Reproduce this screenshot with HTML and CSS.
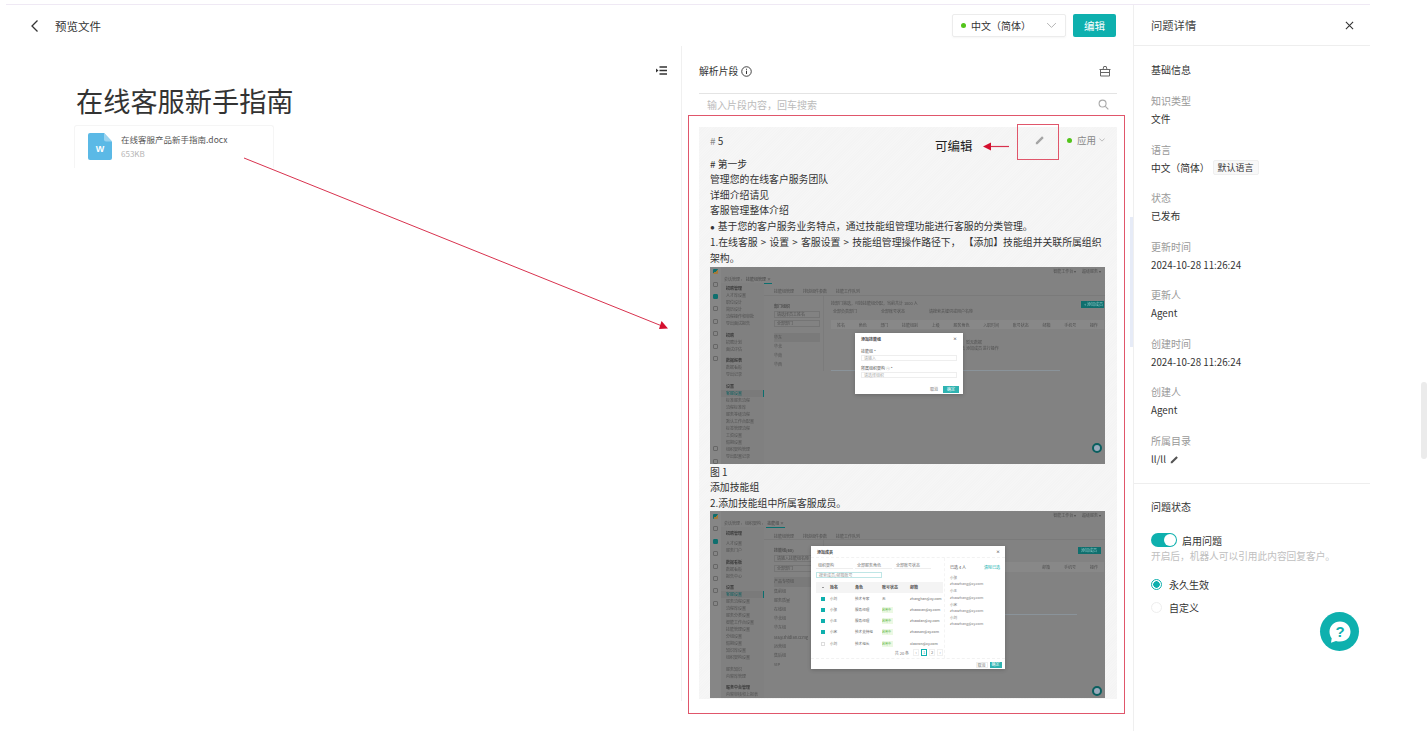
FILE: index.html
```html
<!DOCTYPE html>
<html lang="zh-CN">
<head>
<meta charset="utf-8">
<title>预览文件</title>
<link rel="stylesheet" href="styles.css">
</head>
<body>
<div class="app">
  <main class="main">
    <header class="topbar">
      <div class="back">
        <svg class="back-icon" viewBox="0 0 10 14" width="10" height="14"><path d="M7.5 1.5 2 7l5.5 5.5" fill="none" stroke="#333" stroke-width="1.3"/></svg>
        <span>预览文件</span>
      </div>
      <div class="top-actions">
        <div class="lang-select">
          <i class="dot"></i><span class="lang-text">中文（简体）</span>
          <svg class="chev" viewBox="0 0 12 8" width="11" height="7"><path d="M1 1.2 6 6.2l5-5" fill="none" stroke="#aaa" stroke-width="1"/></svg>
        </div>
        <button class="btn-edit">编辑</button>
      </div>
    </header>
    <div class="body">
      <section class="doc">
        <div class="collapse-row">
          <svg viewBox="0 0 11 9" width="11" height="9"><path d="M3.5 1H11M3.5 4.500H11M3.5 8H11" stroke="#333" stroke-width="1.300" fill="none"/><path d="M0 2.500 2.500 4.500 0 6.500z" fill="#333"/></svg>
        </div>
        <h1 class="doc-title">在线客服新手指南</h1>
        <div class="file-card">
          <svg class="file-icon" viewBox="0 0 24 27" width="24" height="27"><path d="M2 0h14l8 8.500V25a2 2 0 0 1-2 2H2a2 2 0 0 1-2-2V2a2 2 0 0 1 2-2z" fill="#5bb9e6"/><path d="M16 0l8 8.500h-6a2 2 0 0 1-2-2z" fill="#9ad4f0"/><text x="12" y="19" text-anchor="middle" class="file-w">W</text></svg>
          <div class="file-meta">
            <div class="file-name">在线客服产品新手指南.docx</div>
            <div class="file-size">653KB</div>
          </div>
        </div>
      </section>
      <section class="segments">
        <div class="seg-head">
          <div class="seg-title">解析片段
            <svg viewBox="0 0 12 12" width="11" height="11"><circle cx="6" cy="6" r="5.200" fill="none" stroke="#333" stroke-width="1"/><path d="M6 5.200v3.600M6 3v1.200" stroke="#333" stroke-width="1.100"/></svg>
          </div>
          <svg viewBox="0 0 12 12" width="12" height="12"><path d="M1.500 4.500h9v6.500h-9zM.5 4.500h11M4 4.500 4.800 1.500h2.400L8 4.500M1.500 7.500h9" fill="none" stroke="#666" stroke-width="1"/></svg>
        </div>
        <div class="seg-search">
          <span>输入片段内容，回车搜索</span>
          <svg viewBox="0 0 12 12" width="11" height="11"><circle cx="5" cy="5" r="3.800" fill="none" stroke="#aaa" stroke-width="1.200"/><path d="M8 8l3.300 3.300" stroke="#aaa" stroke-width="1.200"/></svg>
        </div>
        <article class="seg-card">
          <div class="card-top">
            <span class="card-no"><em>#</em> 5</span>
            <div class="card-tools">
              <svg class="pencil" viewBox="0 0 12 12" width="10" height="10"><path d="M1 9 8.500 1.500l2 2L3 11H1zM1 11.500h10" fill="#a5a5a5"/></svg>
              <i class="dot"></i><span class="applied">应用</span>
              <svg viewBox="0 0 8 5" width="6" height="4"><path d="M.5.5 4 4 7.500.5" fill="none" stroke="#aaa" stroke-width="1"/></svg>
            </div>
          </div>
          <div class="card-text">
            <p># 第一步</p>
            <p>管理您的在线客户服务团队</p>
            <p>详细介绍请见</p>
            <p>客服管理整体介绍</p>
            <p><span class="bullet">●</span>基于您的客户服务业务特点，通过技能组管理功能进行客服的分类管理。</p>
            <p class="path-line">1.在线客服 &gt; 设置 &gt; 客服设置 &gt; 技能组管理操作路径下， 【添加】技能组并关联所属组织架构。</p>
          </div>
          <div class="mock mock-one">
            <div class="mock-rail"><b class="logo"></b><b></b><b class="on"></b><b></b><b></b><b></b><b></b><b></b><b class="low"></b><b></b></div>
            <div class="mock-col">
              <div class="mock-bar"><span>智能工作台 ▾</span><span>超级服务 ▾</span></div>
              <div class="mock-crumbs"><span>会话管理 ›</span><span class="cr-on">技能组管理 ×</span></div>
              <div class="mock-body">
                <div class="mock-nav">
                  <p class="mh">招聘管理</p><p>人才库设置</p><p>职位设计</p><p>简历设计</p><p>流程操作和审批</p><p>导出面试报告</p>
                  <p class="mh gap">招聘</p><p>招聘计划</p><p>面试评估</p>
                  <p class="mh gap">数据报表</p><p>数据看板</p><p>导出记录</p>
                  <p class="mh gap">设置</p><p class="cur">客服设置</p><p>标准服务流程</p><p>流程标准库</p><p>服务等级流程</p><p>默认工作台配置</p><p>标签管理流程</p><p>工资设置</p><p>假期设置</p><p>组织架构管理</p><p>导出配置记录</p>
                </div>
                <div class="mock-main">
                  <div class="mock-tabs"><span>技能组管理</span><span>排班组件参数</span><span>技能工作队列</span></div>
                  <div class="mock-split">
                    <div class="mock-tree">
                      <p class="mh">部门组织</p><p class="field">请选择员工姓名</p><p class="field f2">全部部门</p><p class="sel">华东</p><p>华北</p><p>华南</p><p>华西</p>
                    </div>
                    <div class="mock-table">
                      <div class="mock-top"><span>按部门筛选，可按技能组分配，当前共计 1000 人</span><span class="mock-add">+ 添加成员</span></div>
                      <div class="mock-filter"><span>全部负责部门</span><span>全部账号状态</span><span>请搜索关键词或用户名称</span></div>
                      <div class="mock-thead"><span>姓名</span><span>角色</span><span>部门</span><span>技能组别</span><span>上级</span><span>服务角色</span><span>入职时间</span><span>账号状态</span><span>邮箱</span><span>手机号</span><span>操作</span></div>
                      <p class="mock-empty">暂无数据</p>
                      <p class="mock-empty e2">可点击 添加成员 进行操作</p>
                      <i class="mock-line"></i>
                    </div>
                  </div>
                </div>
              </div>
            </div>
            <i class="mock-help"></i>
            <div class="dlg dlg-one">
              <div class="dlg-h"><span>添加技能组</span><span>×</span></div>
              <p class="lab">技能组 *</p><p class="inp">请输入</p>
              <p class="lab">所属组织架构 ⓘ *</p><p class="inp">请选择组织</p>
              <div class="dlg-f"><span>取消</span><span class="ok">确定</span></div>
            </div>
          </div>
          <div class="card-text card-text-mid">
            <p>图 1</p>
            <p>添加技能组</p>
            <p>2.添加技能组中所属客服成员。</p>
          </div>
          <div class="mock mock-two">
            <div class="mock-rail"><b class="logo"></b><b></b><b class="on"></b><b></b><b></b><b></b><b></b><b></b></div>
            <div class="mock-col">
              <div class="mock-bar"><span>智能工作台 ▾</span><span>超级服务 ▾</span></div>
              <div class="mock-crumbs"><span>会话管理 ›</span><span>组织架构 ›</span><span class="cr-on">技能组 ×</span></div>
              <div class="mock-body">
                <div class="mock-nav">
                  <p class="mh">招聘管理</p><p class="gap3">人才设置</p><p>服务门户</p>
                  <p class="mh gap">数据看板</p><p>数据看板</p><p>报告中心</p>
                  <p class="mh gap">设置</p><p class="cur">客服设置</p><p>服务流程设置</p><p>流程库设置</p><p>服务分类设置</p><p>智能工作台设置</p><p>技能管理设置</p><p>分组设置</p><p>假期设置</p><p>知识库设置</p><p>组织架构设置</p>
                  <p class="gap">服务知识</p><p>内容库管理</p>
                  <p class="mh gap">服务中台管理</p><p>内容审核和上报表</p>
                </div>
                <div class="mock-main">
                  <div class="mock-tabs"><span>技能组管理</span><span>排班组件参数</span><span>技能工作队列</span></div>
                  <div class="mock-split">
                    <div class="mock-tree">
                      <p class="mh">技能组(60)</p><p class="field">请输入技能组名称</p><p class="field f2">全部部门</p><p class="sel">产品专项组</p><p>售前组</p><p>服务质量</p><p>在线组</p><p>华北组</p><p>华东组</p><p>sss@zhidian.ccmg</p><p>运营组</p><p>售后组</p><p>VIP</p>
                    </div>
                    <div class="mock-table mock-table-two">
                      <div class="mock-top"><span></span><span class="mock-add">添加成员</span></div>
                      <div class="mock-thead mock-thead-low"><span>邮箱</span><span>手机号</span><span>操作</span></div>
                      <i class="mock-line"></i>
                    </div>
                  </div>
                </div>
              </div>
            </div>
            <i class="mock-help"></i>
            <div class="dlg dlg-two">
              <div class="dlg-h"><span>添加成员</span><span>×</span></div>
              <div class="pick">
                <div class="pick-left">
                  <div class="pick-filters"><span>组织架构</span><span>全部服务角色</span><span>全部账号状态</span></div>
                  <div class="pick-search">搜索成员/邮箱账号</div>
                  <div class="pick-head"><i class="dash"></i><span>姓名</span><span>角色</span><span>账号状态</span><span>邮箱</span></div>
                  <div class="pick-row"><i class="chk"></i><span>小刘</span><span>技术专家</span><span>无</span><span>zhanghan@xy.com</span></div>
                  <div class="pick-row"><i class="chk"></i><span>小张</span><span>服务经理</span><span class="tag">启用中</span><span>zhaowan@xy.com</span></div>
                  <div class="pick-row"><i class="chk"></i><span>小王</span><span>服务经理</span><span class="tag">启用中</span><span>zhaodan@xy.com</span></div>
                  <div class="pick-row"><i class="chk"></i><span>小宋</span><span>技术支持组</span><span class="tag">启用中</span><span>zhaosan@xy.com</span></div>
                  <div class="pick-row"><i class="chk off"></i><span>小刘</span><span>技术组长</span><span class="tag">启用中</span><span>xiaoron@xy.com</span></div>
                  <div class="pick-page"><span>共 20 条</span><b>‹</b><b class="act">1</b><b>2</b><b>›</b></div>
                </div>
                <div class="pick-right">
                  <div class="pick-rh"><span>已选 4 人</span><span class="lnk">清除已选</span></div>
                  <p>小张</p><p>zhaozhang@xy.com</p><p class="pg">小王</p><p>zhaozhang@xy.com</p><p class="pg">小宋</p><p>zhaozhang@xy.com</p><p class="pg">小刘</p><p>zhaozhang@xy.com</p>
                </div>
              </div>
              <div class="dlg-f"><span class="cancel">取消</span><span class="ok">确定</span></div>
            </div>
          </div>
        </article>
      </section>
    </div>
  </main>
  <aside class="detail">
    <div class="detail-head"><span>问题详情</span>
      <svg viewBox="0 0 10 10" width="9" height="9"><path d="M1 1l8 8M9 1 1 9" stroke="#333" stroke-width="1.200"/></svg>
    </div>
    <div class="detail-info">
      <h3>基础信息</h3>
      <div class="field-item"><label>知识类型</label><div>文件</div></div>
      <div class="field-item"><label>语言</label><div>中文（简体）<span class="pill">默认语言</span></div></div>
      <div class="field-item"><label>状态</label><div>已发布</div></div>
      <div class="field-item"><label>更新时间</label><div>2024-10-28 11:26:24</div></div>
      <div class="field-item"><label>更新人</label><div>Agent</div></div>
      <div class="field-item"><label>创建时间</label><div>2024-10-28 11:26:24</div></div>
      <div class="field-item"><label>创建人</label><div>Agent</div></div>
      <div class="field-item"><label>所属目录</label><div>ll/ll
        <svg class="mini-pen" viewBox="0 0 12 12" width="9" height="9"><path d="M1 9 8.500 1.500l2 2L3 11H1zM1 11.500h10" fill="#555"/></svg></div></div>
    </div>
    <div class="detail-status">
      <h3>问题状态</h3>
      <div class="switch-row"><i class="switch"></i><span>启用问题</span></div>
      <p class="hint">开启后，机器人可以引用此内容回复客户。</p>
      <div class="radio-row"><i class="radio on"></i><span>永久生效</span></div>
      <div class="radio-row"><i class="radio"></i><span>自定义</span></div>
    </div>
  </aside>
</div>

<div class="annot-box"></div>
<div class="annot-small"></div>
<div class="annot-label">可编辑</div>
<svg class="annot-lines" viewBox="0 0 1427 732" width="1427" height="732">
  <path d="M244 158 662 326" stroke="#d8324e" stroke-width="1" fill="none"/>
  <path d="M668 328.500 659 329 661.500 321z" fill="#d40f2e"/>
  <path d="M1009 146.500H990" stroke="#d8324e" stroke-width="1.200" fill="none"/>
  <path d="M983 146.500 991 142.500V150.500z" fill="#d40f2e"/>
</svg>
<i class="page-thumb"></i>
<i class="list-thumb"></i>
<button class="help" aria-label="帮助">
  <svg viewBox="0 0 24 24" width="24" height="24"><path d="M12 1.500C5.900 1.500 1.500 5.900 1.500 11.800c0 2.600.8 4.800 2.200 6.500L3 22.800l5-1.800c1.200.4 2.600.6 4 .6 6.100 0 10.500-4 10.500-9.800S18.100 1.500 12 1.500z" fill="#fff"/><text x="12" y="17" text-anchor="middle" class="help-q">?</text></svg>
</button>
</body>
</html>
```
FILE: styles.css
```css
* { box-sizing: border-box; }
html, body { margin: 0; padding: 0; }
body {
  width: 1427px;
  height: 732px;
  overflow: hidden;
  position: relative;
  background: #fff;
  color: #333;
  font-family: "Noto Sans CJK SC", "Liberation Sans", sans-serif;
  font-size: 10px;
}
p { margin: 0; }
.app {
  display: flex;
  width: 1364px;
  height: 728px;
  margin-top: 4px;
  margin-left: 6px;
  border-top: 1px solid #efe9f4;
}
.main { width: 1127px; display: flex; flex-direction: column; }
.topbar {
  height: 41px;
  display: flex;
  align-items: center;
  justify-content: space-between;
  padding: 0 17px 0 24px;
}
.back { display: flex; align-items: center; gap: 15px; color: #333; font-size: 11.5px; margin-top: 1px; }
.top-actions { display: flex; align-items: center; gap: 7px; }
.lang-select {
  width: 114px;
  height: 23px;
  border: 1px solid #ececec;
  border-radius: 2px;
  display: flex;
  align-items: center;
  padding: 0 8px;
  color: #333;
  box-shadow: 0 1px 2px rgba(0,0,0,.04);
}
.dot { display: inline-block; width: 5px; height: 5px; border-radius: 50%; background: #52c41a; flex: none; }
.lang-text { margin-left: 5px; flex: 1; font-size: 10px; }
.btn-edit {
  width: 43px;
  height: 23px;
  border: 0;
  border-radius: 2px;
  background: #0eb0ae;
  color: #fff;
  font: inherit;
  font-size: 10.5px;
  padding: 0;
}
.body { flex: 1; display: flex; height: 655px; }
.doc { width: 675px; height: 655px; position: relative; }
.collapse-row { display: flex; justify-content: flex-end; padding: 20px 14px 0 0; height: 36px; }
.doc-title {
  margin: 0 0 0 70px;
  font-size: 27.2px;
  font-weight: 400;
  line-height: 36px;
  color: #333;
  height: 37px;
}
.file-card {
  margin: 6px 0 0 68px;
  width: 200px;
  height: 43px;
  border: 1px solid #f5f5f5;
  border-bottom: 0;
  border-radius: 3px 3px 0 0;
  padding: 7px 13px;
  display: flex;
  gap: 9px;
}
.file-icon { flex: none; }
.file-w { font: 700 9px "Liberation Sans", sans-serif; fill: #fff; }
.file-meta { font-size: 8.5px; line-height: 13px; }
.file-name { color: #555; }
.file-size { color: #b5b5b5; font-size: 8px; margin-top: 1px; }
.segments {
  width: 452px;
  height: 655px;
  border-left: 1px solid #f0f0f0;
  padding: 0 16px 0 17px;
  display: flex;
  flex-direction: column;
}
.seg-head {
  height: 47px;
  padding-top: 16px;
  display: flex;
  justify-content: space-between;
  align-items: flex-start;
  padding-right: 6px;
}
.seg-title { display: flex; align-items: center; gap: 3px; line-height: 18px; font-size: 9.85px; }
.seg-head > svg { margin-top: 3px; }
.seg-search {
  height: 22px;
  border-top: 1px solid #e4e4e4;
  display: flex;
  align-items: center;
  justify-content: space-between;
  padding: 0 8px;
  color: #bbb;
  font-size: 10px;
}
.seg-card {
  margin-top: 12px;
  flex: 1 0 auto;
  height: 572px;
  max-height: 572px;
  overflow: hidden;
  background: #f5f5f5 repeating-linear-gradient(135deg, #f4f4f4 0 1px, #f6f6f6 1px 2px);
  padding: 0 12px 0 11px;
}
.card-top { height: 29.5px; display: flex; justify-content: space-between; align-items: center; padding-bottom: 3.5px; }
.card-no { font-size: 10px; color: #333; }
.card-no em { font-style: normal; color: #888; }
.card-tools { display: flex; align-items: center; color: #999; font-size: 9.5px; }
.pencil { margin-right: 22px; }
.applied { margin: 0 3px 0 5px; color: #888; }
.card-text { font-size: 9.85px; line-height: 15.6px; color: #333; }
.card-text-mid { padding-top: 1px; }
.path-line { word-spacing: 1px; }
.bullet { display: inline-block; width: 7.7px; font-size: 8px; font-family: "Liberation Sans", sans-serif; }
.mock {
  position: relative;
  width: 395px;
  overflow: hidden;
  background: #828282;
  color: #505050;
  font-size: 4px;
  line-height: 6px;
  display: flex;
}
.mock-one { height: 197px; }
.mock-two { height: 187px; }
.mock-rail {
  width: 11px;
  background: #868686;
  display: flex;
  flex-direction: column;
  align-items: center;
  gap: 7.4px;
  padding-top: 2.5px;
  flex: none;
}
.mock-rail b { width: 5px; height: 5px; border: 1px solid #666; border-radius: 1px; flex: none; }
.mock-rail b.on { background: #0f6f6e; border-color: #0f6f6e; }
.mock-rail b.logo { background: linear-gradient(135deg, #0f6f6e 50%, #a5793a 50%); border: 0; }
.mock-rail b.low { margin-top: 78px; }
.mock-col { flex: 1; display: flex; flex-direction: column; min-width: 0; filter: blur(.3px); }
.mock-bar { height: 8px; display: flex; justify-content: flex-end; gap: 6px; padding: 1px 4px 0; white-space: nowrap; }
.mock-crumbs { height: 8px; display: flex; gap: 3px; padding: 1px 0 0 3px; white-space: nowrap; }
.cr-on { border-bottom: 1px solid #0a6f6f; height: 8px; padding: 0 1px; color: #444; }
.mock-body { flex: 1; display: flex; min-height: 0; }
.mock-nav { width: 43px; padding-top: 2.5px; background: #808080; flex: none; }
.mock-nav p { padding-left: 5px; line-height: 7px; white-space: nowrap; }
.mock-nav .mh { font-weight: 700; color: #3a3a3a; }
.mock-nav .gap { margin-top: 4.6px; }
.mock-nav .gap3 { margin-top: 3px; }
.mock-nav .cur { color: #0a5f5f; background: #7a7a7a; border-right: 1px solid #0a6f6f; }
.mock-main { flex: 1; min-width: 0; }
.mock-tabs { display: flex; gap: 9px; height: 13px; padding: 5.5px 0 0 10px; border-bottom: 1px solid #7a7a7a; white-space: nowrap; }
.mock-split { display: flex; }
.mock-tree { width: 60px; padding: 7px 3px 0 10px; border-right: 1px solid #7b7b7b; flex: none; }
.mock-tree p { line-height: 9.2px; white-space: nowrap; }
.mock-tree .mh { line-height: 6px; font-weight: 700; }
.mock-tree .field { border: 1px solid #757575; line-height: 5px; height: 7px; margin-top: 2px; padding-left: 2px; }
.mock-tree .f2 { margin-top: 2.5px; }
.mock-tree .sel { background: #7a7a7a; margin-top: 5.5px; }
.mock-table { flex: 1; padding: 4px 1px 0 7px; min-width: 0; }
.mock-top { display: flex; justify-content: space-between; height: 6px; white-space: nowrap; }
.mock-add { background: #0f6f6e; color: #8fc9c8; padding: 0 3px; width: 23px; height: 7px; margin-top: 1px; }
.mock-filter { display: flex; gap: 24px; margin-top: 2px; padding-left: 2px; white-space: nowrap; }
.mock-thead { display: flex; justify-content: space-between; background: #888; margin-top: 6.5px; padding: 1.5px 6px; height: 9px; white-space: nowrap; }
.mock-thead-low { margin-top: 10px; justify-content: flex-end; gap: 14px; height: 10px; }
.mock-empty { margin: 11px 0 0 135px; line-height: 5px; white-space: nowrap; }
.mock-empty.e2 { margin-top: 1px; margin-left: 122px; }
.mock-line { display: block; width: 229px; height: 1px; background: #8a939a; margin-top: 19px; }
.mock-table-two .mock-line { margin-top: 42px; width: 246px; }
.mock-table-two .mock-top { margin-top: 2px; padding-right: 3px; }
.mock-help {
  position: absolute;
  right: 3px;
  bottom: 11px;
  width: 10px;
  height: 10px;
  border-radius: 50%;
  background: #9ab;
  border: 2.5px solid #0a5f5f;
}
.mock-two .mock-help { bottom: 2.5px; }
.dlg {
  position: absolute;
  background: #fff;
  color: #777;
  box-shadow: 0 1px 4px rgba(0,0,0,.2);
}
.dlg-one { left: 145px; top: 66.5px; width: 108px; height: 61px; padding: 3px 6px 0; }
.dlg-h { display: flex; justify-content: space-between; color: #444; font-weight: 700; height: 6px; }
.lab { margin-top: 6.5px; color: #555; line-height: 5px; height: 5px; white-space: nowrap; }
.lab ~ .lab { margin-top: 5.5px; }
.inp { border: 1px solid #eee; color: #aaa; padding-left: 2px; margin-top: 1px; height: 6px; line-height: 4px; }
.dlg-one .dlg-f { display: flex; justify-content: flex-end; align-items: center; gap: 2px; margin-top: 7.5px; margin-right: -2px; }
.dlg-f span { padding: 0 3px; line-height: 6px; height: 6px; }
.dlg-one .dlg-f .ok { padding: 0 4px; line-height: 7px; height: 7px; }
.dlg-f .ok { background: #2fb3b1; color: #fff; }
.dlg-two { left: 101px; top: 35px; width: 194px; height: 123px; padding: 0; }
.dlg-two .dlg-h { height: 12px; padding: 3px 5px 0 6px; border-bottom: 1px dashed #f2f2f2; }
.pick { display: flex; height: 100px; }
.pick-left { width: 132px; padding: 5px 0 0 5px; flex: none; }
.pick-filters { display: flex; gap: 2px; height: 6px; }
.pick-filters span { flex: 0 0 37px; border: 1px solid #eee; border-width: 0 0 1px; padding-left: 2px; white-space: nowrap; line-height: 5px; }
.pick-search { width: 66px; height: 6px; border: 1px solid #bfe6e6; margin-top: 2.5px; padding-left: 2px; color: #999; line-height: 4px; white-space: nowrap; }
.pick-head, .pick-row { display: grid; grid-template-columns: 14px 25px 27px 28px 1fr; align-items: center; white-space: nowrap; overflow: hidden; }
.pick-head { background: #f4f4f4; height: 11px; margin-top: 4px; font-weight: 700; color: #555; }
.dash { display: block; width: 2px; height: 1px; background: #999; margin-left: 6px; }
.pick-row { height: 11.3px; color: #666; font-size: 3.6px; }
.chk { width: 4px; height: 4px; background: #0eb0ae; margin-left: 5px; }
.chk.off { background: #fff; border: 1px solid #ddd; }
.tag { color: #5ab53a; background: #ecf9e4; width: 11px; overflow: hidden; font-size: 3px; }
.pick-page { display: flex; justify-content: flex-end; align-items: center; gap: 2px; height: 7px; }
.pick-page span { margin-right: 2px; }
.pick-page b { width: 6px; height: 7px; border: 1px solid #f0f0f0; text-align: center; font-weight: 400; line-height: 5px; }
.pick-page b.act { border-color: #0eb0ae; color: #0eb0ae; }
.pick-right { flex: 1; margin-left: 1px; padding: 6px 5px 0; border-left: 1px dashed #f4f4f4; }
.pick-right p { line-height: 6.2px; white-space: nowrap; font-size: 3.6px; }
.pick-right .pg { margin-top: 1px; }
.pick-rh { display: flex; justify-content: space-between; height: 6px; margin-bottom: 4.5px; color: #555; white-space: nowrap; }
.lnk { color: #0eb0ae; }
.dlg-two .dlg-f { display: flex; justify-content: flex-end; gap: 2px; padding: 3px 3.5px 0; border-top: 1px dashed #f2f2f2; }
.dlg-two .dlg-f span { width: 12px; text-align: center; padding: 0; line-height: 5px; }
.cancel { border: 1px solid #eee; }

.detail { width: 237px; height: 726px; border-left: 1px solid #efefef; }
.detail-head {
  height: 41px;
  border-bottom: 1px solid #eee;
  display: flex;
  align-items: center;
  justify-content: space-between;
  padding: 0 16px 0 17px;
  font-size: 11.3px;
  color: #444;
}
.detail-info { padding: 15px 17px 0; height: 438px; border-bottom: 1px solid #eee; }
.detail h3 { margin: 0; font-size: 10px; font-weight: 400; line-height: 18px; color: #333; height: 30px; }
.field-item { height: 48.57px; font-size: 9.75px; line-height: 19px; color: #333; white-space: nowrap; }
.field-item label { display: block; color: #999; font-size: 10px; }
.pill {
  display: inline-block;
  height: 15px;
  line-height: 14px;
  margin-left: 3px;
  padding: 0 4px;
  font-size: 9px;
  background: #f8f8f8;
  border: 1px solid #efefef;
  border-radius: 2px;
  vertical-align: 1px;
}
.mini-pen { margin-left: 2px; vertical-align: -1px; }
.detail-status { padding: 14px 17px 0; }
.detail-status h3 { height: 34px; }
.switch-row { display: flex; align-items: center; gap: 5px; font-size: 10px; height: 16px; }
.switch { display: block; width: 26px; height: 14px; border-radius: 7px; background: #0eb0ae; position: relative; }
.switch::after { content: ""; position: absolute; right: 1px; top: 1px; width: 12px; height: 12px; border-radius: 50%; background: #fff; }
.hint { color: #c0c0c0; font-size: 9.7px; line-height: 16px; }
.radio-row { display: flex; align-items: center; gap: 7px; font-size: 10px; height: 23px; }
.hint + .radio-row { margin-top: 9px; }
.radio { width: 11px; height: 11px; border-radius: 50%; border: 1px solid #eee; display: block; }
.radio.on { border-color: #0eb0ae; background: radial-gradient(circle, #0eb0ae 0 3px, #fff 3.5px); }

.annot-box { position: absolute; left: 688px; top: 115px; width: 437px; height: 599px; border: 1.5px solid #e0566b; }
.annot-small { position: absolute; left: 1017px; top: 124px; width: 42px; height: 36px; border: 1.5px solid #e0566b; }
.annot-label { position: absolute; left: 935px; top: 138px; font-size: 12.5px; line-height: 16px; color: #222; font-weight: 400; }
.annot-lines { position: absolute; left: 0; top: 0; pointer-events: none; }
.page-thumb { position: absolute; left: 1421px; top: 382px; width: 6px; height: 77px; background: #ebebeb; border-radius: 3px; }
.list-thumb { position: absolute; left: 1130px; top: 217px; width: 3px; height: 130px; background: #e6ebf7; }
.help {
  position: absolute;
  left: 1320px;
  top: 612px;
  width: 39px;
  height: 39px;
  border: 0;
  border-radius: 50%;
  background: #0eb0ae;
  padding: 0;
  display: flex;
  align-items: center;
  justify-content: center;
}
.help-q { font: 700 15px "Liberation Sans", sans-serif; fill: #0eb0ae; }
```
